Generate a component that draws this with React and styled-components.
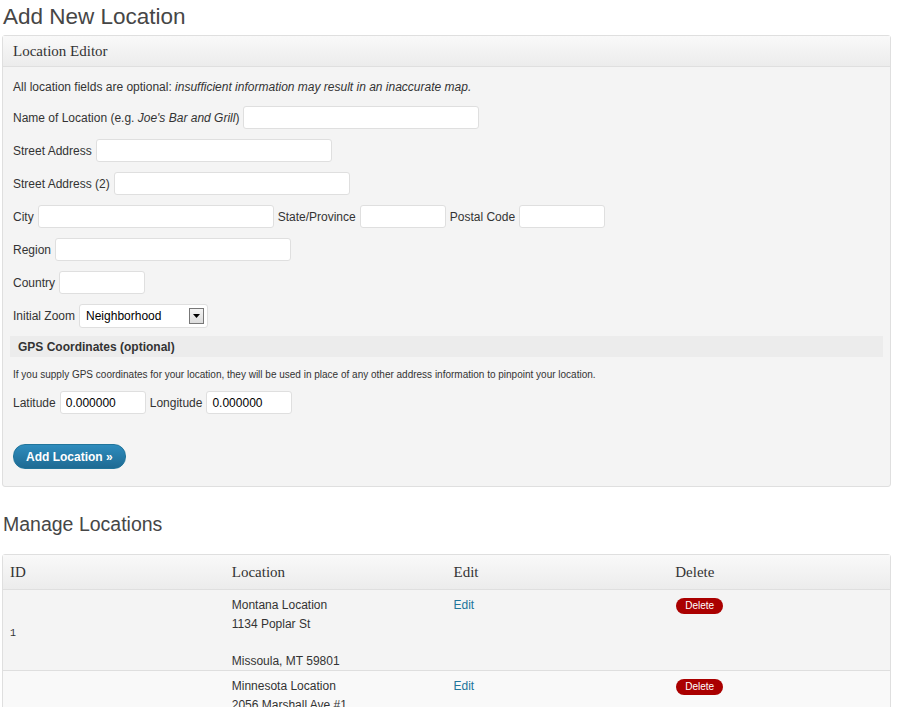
import React from 'react'
import styled, { createGlobalStyle } from 'styled-components'

const GlobalStyle = createGlobalStyle`
    body {
        margin: 0;
        background: #ffffff;
        font-family: Arial, "Liberation Sans", sans-serif;
        color: #333333;
    }
`;

const Page = styled.div`
    margin: 0 9px 0 2px;
`;

const PageTitle = styled.h2`
    margin: 0;
    padding: 3px 0 0 1px;
    height: 32px;
    font-family: Arial, "Liberation Sans", sans-serif;
    font-weight: normal;
    font-size: ${props => props.size || 22.5}px;
    line-height: 28px;
    color: #464646;
`;

const Panel = styled.div`
    border: 1px solid #dfdfdf;
    border-radius: 3px;
    background: #f4f4f4;
`;

const PanelHeader = styled.div`
    height: 30px;
    padding: 0 10px;
    display: flex;
    align-items: center;
    font-family: "Liberation Serif", Georgia, serif;
    font-size: 15px;
    color: #333333;
    background: linear-gradient(to bottom, #f9f9f9, #ececec);
    border-bottom: 1px solid #dfdfdf;
`;

const PanelBody = styled.div`
    padding: 11px 10px 17px;
    font-size: 12px;
`;

const Intro = styled.p`
    margin: 0 0 10px;
    line-height: 18px;
`;

const FieldRow = styled.div`
    display: flex;
    align-items: center;
    gap: 4px;
    height: 23px;
    margin-bottom: ${props => props.last ? 9 : 10}px;
`;

const Label = styled.span`
    white-space: nowrap;
`;

const TextInput = styled.input`
    box-sizing: border-box;
    width: ${props => props.w || 236}px;
    height: 23px;
    padding: 2px 5px;
    border: 1px solid #dfdfdf;
    border-radius: 3px;
    background: #ffffff;
    font-family: Arial, "Liberation Sans", sans-serif;
    font-size: 12px;
    color: #000;
    outline: none;
`;

const SelectBox = styled.div`
    box-sizing: border-box;
    width: 129px;
    height: 24px;
    display: flex;
    align-items: center;
    justify-content: space-between;
    padding: 0 3px 0 6px;
    border: 1px solid #dfdfdf;
    border-radius: 3px;
    background: #ffffff;
    font-size: 12px;
    color: #000;
`;

const SelectArrow = styled.span`
    box-sizing: border-box;
    width: 15px;
    height: 16px;
    display: flex;
    align-items: center;
    justify-content: center;
    border: 1px solid #777;
    background: linear-gradient(to bottom, #f4f4f4, #dcdcdc);
`;

const SubHeader = styled.div`
    margin: 0 -3px;
    height: 21px;
    padding: 0 8px;
    display: flex;
    align-items: center;
    background: #ececec;
    font-weight: bold;
    font-size: 12px;
`;

const Note = styled.p`
    margin: 11px 0 9px;
    font-size: 10px;
    line-height: 14px;
`;

const PrimaryButton = styled.button`
    display: block;
    margin-top: 30px;
    height: 25px;
    padding: 0 12px;
    border: 1px solid #21759b;
    border-radius: 12px;
    background: linear-gradient(to bottom, #2e8cbd, #1e6a93);
    color: #ffffff;
    font-family: Arial, "Liberation Sans", sans-serif;
    font-weight: bold;
    font-size: 12px;
    cursor: pointer;
`;

const Table = styled.table`
    width: 100%;
    border-collapse: separate;
    border-spacing: 0;
    border: 1px solid #dfdfdf;
    border-radius: 3px;
    table-layout: fixed;
`;

const Th = styled.th`
    height: 34px;
    padding: 0 7px;
    text-align: left;
    font-family: "Liberation Serif", Georgia, serif;
    font-weight: normal;
    font-size: 15px;
    color: #333;
    background: linear-gradient(to bottom, #f9f9f9, #ececec);
    border-bottom: 1px solid #dfdfdf;
`;

const Td = styled.td`
    padding: 6px 7px 0;
    vertical-align: ${props => props.middle ? 'middle' : 'top'};
    font-size: 12px;
    line-height: 18.5px;
    color: #333;
    background: ${props => props.alt ? '#f9f9f9' : '#f4f4f4'};
    border-bottom: 1px solid #dfdfdf;
`;

const IdText = styled.code`
    font-family: "Liberation Mono", monospace;
    font-size: 10px;
`;

const EditLink = styled.a`
    color: #21759b;
    text-decoration: none;
`;

const DeleteButton = styled.button`
    margin: 1px 0 0 1px;
    height: 16px;
    padding: 0 9px;
    border: none;
    border-radius: 8px;
    background: #aa0000;
    color: #ffffff;
    font-family: Arial, "Liberation Sans", sans-serif;
    font-size: 10px;
    line-height: 16px;
    cursor: pointer;
`;

const Spacer = styled.div`
    height: ${props => props.h}px;
`;

const locations = [
    { id: 1, lines: ['Montana Location', '1134 Poplar St', '', 'Missoula, MT 59801'] },
    { id: 2, lines: ['Minnesota Location', '2056 Marshall Ave #1', '', 'Saint Paul, MN 55104'] },
];

function LocationEditor(){
    return (
        <Panel>
            <PanelHeader>Location Editor</PanelHeader>
            <PanelBody>
                <Intro>All location fields are optional: <i>insufficient information may result in an inaccurate map.</i></Intro>
                <FieldRow>
                    <Label>Name of Location (e.g. <i>Joe's Bar and Grill</i>)</Label>
                    <TextInput />
                </FieldRow>
                <FieldRow>
                    <Label>Street Address</Label>
                    <TextInput />
                </FieldRow>
                <FieldRow>
                    <Label>Street Address (2)</Label>
                    <TextInput />
                </FieldRow>
                <FieldRow>
                    <Label>City</Label>
                    <TextInput />
                    <Label>State/Province</Label>
                    <TextInput w={86} />
                    <Label>Postal Code</Label>
                    <TextInput w={86} />
                </FieldRow>
                <FieldRow>
                    <Label>Region</Label>
                    <TextInput />
                </FieldRow>
                <FieldRow>
                    <Label>Country</Label>
                    <TextInput w={86} />
                </FieldRow>
                <FieldRow last>
                    <Label>Initial Zoom</Label>
                    <SelectBox>
                        <span>Neighborhood</span>
                        <SelectArrow>
                            <svg width="7" height="4" viewBox="0 0 7 4"><path d="M0 0h7L3.5 4z" fill="#000" /></svg>
                        </SelectArrow>
                    </SelectBox>
                </FieldRow>
                <SubHeader>GPS Coordinates (optional)</SubHeader>
                <Note>If you supply GPS coordinates for your location, they will be used in place of any other address information to pinpoint your location.</Note>
                <FieldRow>
                    <Label>Latitude</Label>
                    <TextInput w={86} defaultValue="0.000000" />
                    <Label>Longitude</Label>
                    <TextInput w={86} defaultValue="0.000000" />
                </FieldRow>
                <PrimaryButton>Add Location »</PrimaryButton>
            </PanelBody>
        </Panel>
    )
}

function LocationTable(){
    return (
        <Table>
            <thead>
                <tr>
                    <Th>ID</Th>
                    <Th>Location</Th>
                    <Th>Edit</Th>
                    <Th>Delete</Th>
                </tr>
            </thead>
            <tbody>
                {locations.map((loc, i) => (
                    <tr key={loc.id}>
                        <Td alt={i % 2 === 1} middle><IdText>{loc.id}</IdText></Td>
                        <Td alt={i % 2 === 1}>
                            {loc.lines.map((line, j) => <div key={j}>{line || '\u00a0'}</div>)}
                        </Td>
                        <Td alt={i % 2 === 1}><EditLink href="#">Edit</EditLink></Td>
                        <Td alt={i % 2 === 1}><DeleteButton>Delete</DeleteButton></Td>
                    </tr>
                ))}
            </tbody>
        </Table>
    )
}

export default function App(){
    return (
        <Page>
            <GlobalStyle />
            <PageTitle>Add New Location</PageTitle>
            <LocationEditor />
            <Spacer h={20} />
            <PageTitle size={19.5}>Manage Locations</PageTitle>
            <Spacer h={12} />
            <LocationTable />
        </Page>
    )
}
